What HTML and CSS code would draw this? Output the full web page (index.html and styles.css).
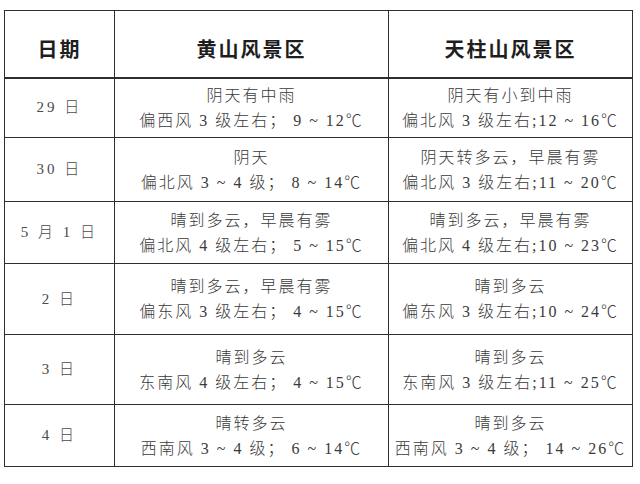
FILE: index.html
```html
<!DOCTYPE html>
<html lang="zh">
<head>
<meta charset="utf-8">
<title>天气预报</title>
<link rel="stylesheet" href="styles.css">
</head>
<body>
<table class="forecast">
  <colgroup>
    <col class="c-date">
    <col class="c-a">
    <col class="c-b">
  </colgroup>
  <thead>
    <tr class="head">
      <th>日期</th>
      <th>黄山风景区</th>
      <th>天柱山风景区</th>
    </tr>
  </thead>
  <tbody>
    <tr class="r1">
      <td class="date">29 日</td>
      <td><div>阴天有中雨</div><div>偏西风 3 级左右； 9 ~ 12℃</div></td>
      <td><div>阴天有小到中雨</div><div>偏北风 3 级左右;12 ~ 16℃</div></td>
    </tr>
    <tr class="r2">
      <td class="date">30 日</td>
      <td><div>阴天</div><div>偏北风 3 ~ 4 级； 8 ~ 14℃</div></td>
      <td><div>阴天转多云，早晨有雾</div><div>偏北风 3 级左右;11 ~ 20℃</div></td>
    </tr>
    <tr class="r3">
      <td class="date">5 月 1 日</td>
      <td><div>晴到多云，早晨有雾</div><div>偏北风 4 级左右； 5 ~ 15℃</div></td>
      <td><div>晴到多云，早晨有雾</div><div>偏北风 4 级左右;10 ~ 23℃</div></td>
    </tr>
    <tr class="r4">
      <td class="date">2 日</td>
      <td><div>晴到多云，早晨有雾</div><div>偏东风 3 级左右； 4 ~ 15℃</div></td>
      <td><div>晴到多云</div><div>偏东风 3 级左右;10 ~ 24℃</div></td>
    </tr>
    <tr class="r5">
      <td class="date">3 日</td>
      <td><div>晴到多云</div><div>东南风 4 级左右； 4 ~ 15℃</div></td>
      <td><div>晴到多云</div><div>东南风 3 级左右;11 ~ 25℃</div></td>
    </tr>
    <tr class="r6">
      <td class="date">4 日</td>
      <td><div>晴转多云</div><div>西南风 3 ~ 4 级； 6 ~ 14℃</div></td>
      <td><div>晴到多云</div><div>西南风 3 ~ 4 级； 14 ~ 26℃</div></td>
    </tr>
  </tbody>
</table>
</body>
</html>
```
FILE: styles.css
```css
html, body {
  margin: 0;
  padding: 0;
  background: #ffffff;
}

body {
  padding: 10px 0 0 4px;
  font-family: "Liberation Serif", "Noto Sans CJK SC", serif;
  color: #3a3a3a;
}

.forecast {
  border-collapse: collapse;
  table-layout: fixed;
  width: 628px;
}

.c-date { width: 110px; }
.c-a { width: 274px; }
.c-b { width: 244px; }

.forecast th,
.forecast td {
  border: 1px solid #2e2e2e;
  padding: 0;
  text-align: center;
  vertical-align: middle;
}

.forecast th {
  font-size: 20px;
  font-weight: bold;
  letter-spacing: 2px;
  color: #1e1e1e;
  padding-top: 10px;
}

.head { height: 67px; }
.head th { border-bottom: 2px solid #2e2e2e; }

.forecast td {
  font-size: 16px;
  font-weight: 300;
  line-height: 25px;
  letter-spacing: 2px;
  white-space: nowrap;
}

.forecast td.date {
  font-size: 15px;
  letter-spacing: 3px;
  color: #4a4a4a;
}

.r1 { height: 60px; }
.r2 { height: 64px; }
.r3 { height: 62px; }
.r4 { height: 71px; }
.r5 { height: 70px; }
.r6 { height: 62px; }
```
